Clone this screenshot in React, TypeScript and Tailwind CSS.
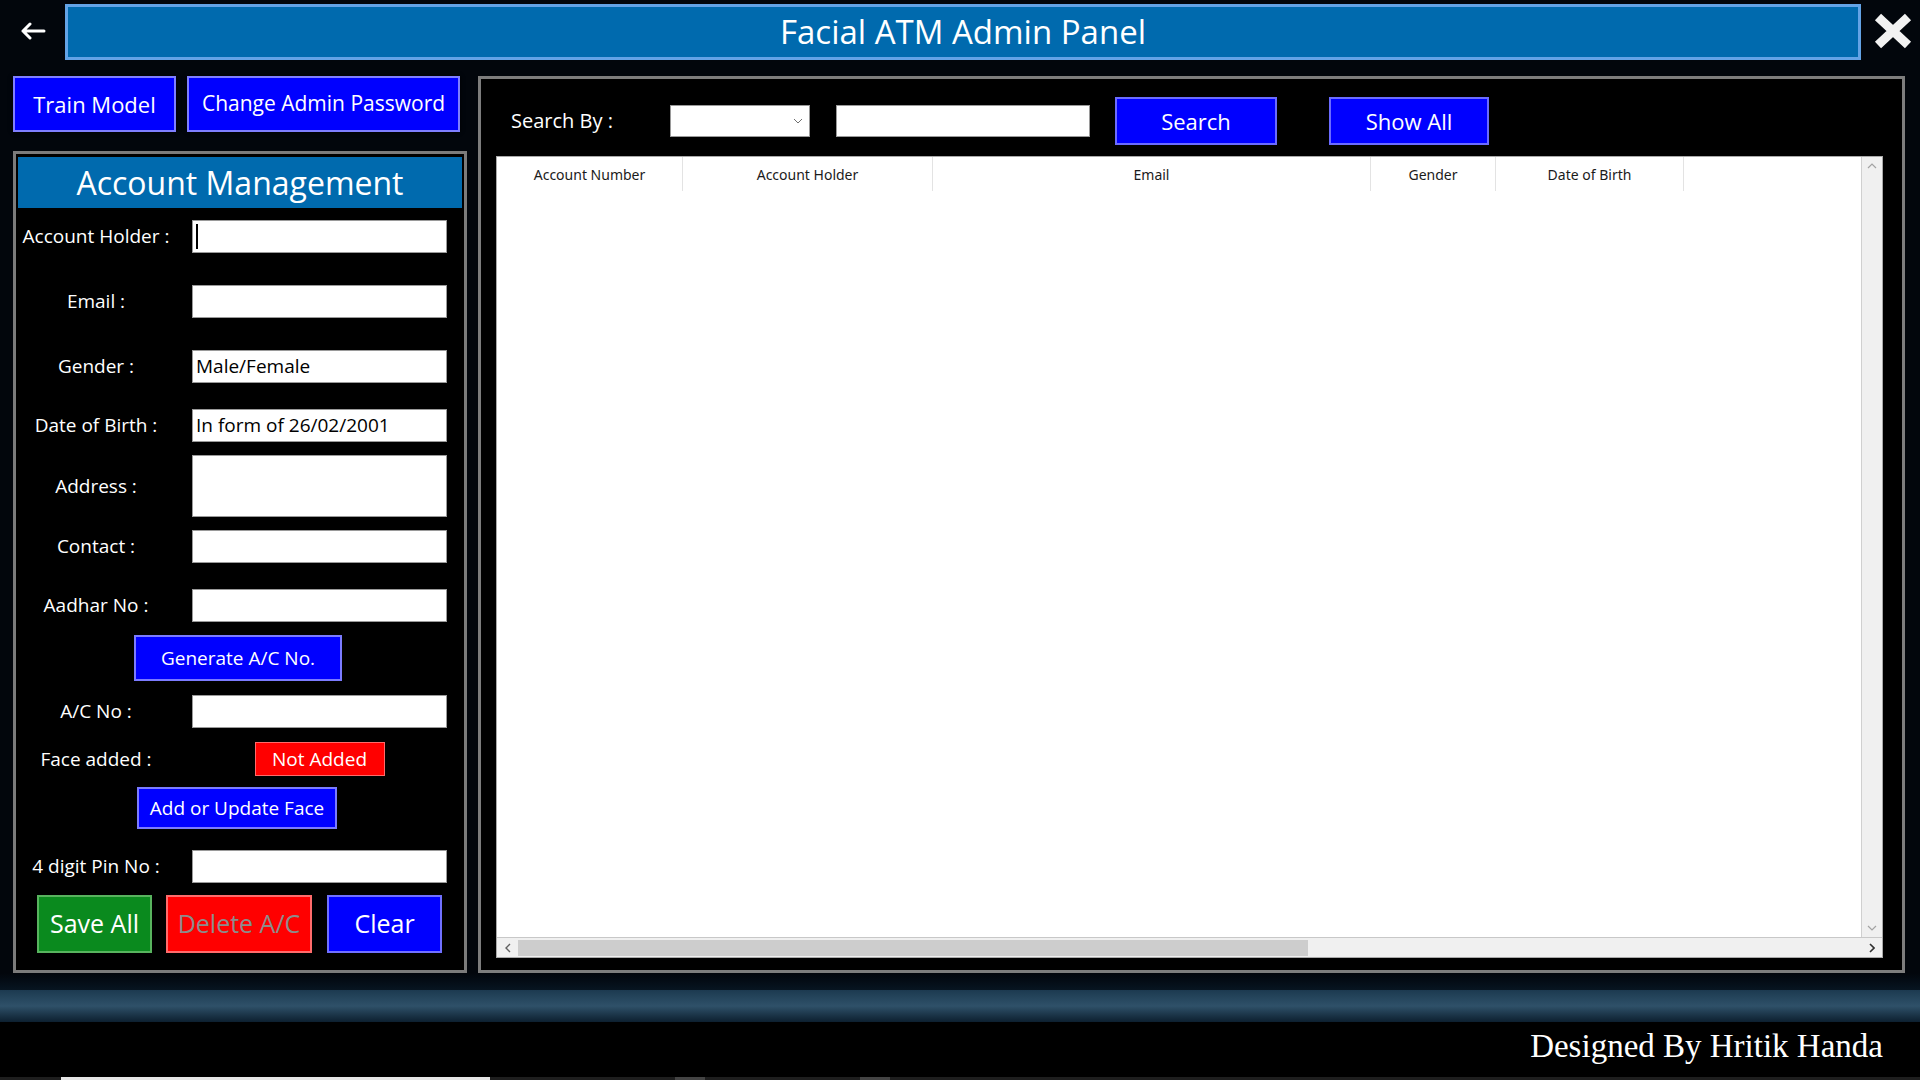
const ui = "font-['Comic_Sans_MS','Open_Sans',sans-serif]";

function Field({ label, value, tall, caret }: { label: string; value?: string; tall?: boolean; caret?: boolean }) {
  return (
    <div className="flex items-center">
      <div className="w-[160px] text-center text-[19px] text-white whitespace-nowrap">{label}</div>
      <div
        className={`ml-[16px] w-[255px] ${tall ? "h-[62px]" : "h-[33px]"} bg-white border border-[#9a9a9a] flex items-center px-[3px] text-[19px] text-black whitespace-nowrap`}
      >
        {caret && <span className="w-[2px] h-[25px] bg-black" />}
        {value}
      </div>
    </div>
  );
}

function Table() {
  const cols = [
    { name: "Account Number", w: "w-[186px]" },
    { name: "Account Holder", w: "w-[250px]" },
    { name: "Email", w: "w-[438px]" },
    { name: "Gender", w: "w-[125px]" },
    { name: "Date of Birth", w: "w-[188px]" },
  ];
  return (
    <div className="mt-[11px] ml-[15px] w-[1387px] h-[802px] bg-white border border-[#a9a9a9] flex flex-col">
      <div className="flex h-[780px]">
        <div className="flex-1 flex flex-col">
          <div className="flex h-[34px] font-['Noto_Sans',sans-serif] text-[14px] text-[#1b1b1b]">
            {cols.map((c) => (
              <div key={c.name} className={`${c.w} flex items-center justify-center border-r border-[#e3e3e3]`}>
                {c.name}
              </div>
            ))}
          </div>
          <div className="flex-1" />
        </div>
        <div className="w-[21px] bg-[#f0f0f0] border-l border-[#d0d0d0] flex flex-col justify-between items-center py-[6px]">
          <svg width="10" height="6" viewBox="0 0 10 6">
            <path d="M1 5 L5 1 L9 5" fill="none" stroke="#a3a3a3" strokeWidth="1.2" />
          </svg>
          <svg width="10" height="6" viewBox="0 0 10 6">
            <path d="M1 1 L5 5 L9 1" fill="none" stroke="#a3a3a3" strokeWidth="1.2" />
          </svg>
        </div>
      </div>
      <div className="h-[20px] bg-[#f0f0f0] border-t border-[#c8c8c8] flex items-center">
        <div className="w-[21px] flex justify-center">
          <svg width="6" height="10" viewBox="0 0 6 10">
            <path d="M5 1 L1 5 L5 9" fill="none" stroke="#606060" strokeWidth="1.4" />
          </svg>
        </div>
        <div className="w-[790px] h-[16px] bg-[#cdcdcd]" />
        <div className="flex-1" />
        <div className="w-[21px] flex justify-center">
          <svg width="6" height="10" viewBox="0 0 6 10">
            <path d="M1 1 L5 5 L1 9" fill="none" stroke="#303030" strokeWidth="1.6" />
          </svg>
        </div>
      </div>
    </div>
  );
}

export default function App() {
  return (
    <div className={`w-[1920px] h-[1080px] overflow-hidden flex flex-col bg-[#02060c] ${ui}`}>
      {/* Title row */}
      <div className="h-[76px] flex shrink-0">
        <div className="w-[65px] h-[62px] flex items-center justify-center">
          <svg width="26" height="18" viewBox="0 0 26 18">
            <path d="M24 9 H3 M10 2 L3 9 L10 16" fill="none" stroke="white" strokeWidth="3" strokeLinecap="round" strokeLinejoin="round" />
          </svg>
        </div>
        <div className="mt-[4px] h-[56px] w-[1796px] bg-[#006aae] border-[3px] border-[#63a3e6] flex items-center justify-center text-white text-[33px]">
          Facial ATM Admin Panel
        </div>
        <div className="flex-1 h-[62px] flex items-center justify-center pl-[4px]">
          <svg width="40" height="36" viewBox="0 0 40 36">
            <path d="M5 4 L35 32 M35 4 L5 32" stroke="#f2f2f2" strokeWidth="9" strokeLinecap="butt" />
          </svg>
        </div>
      </div>

      {/* Main */}
      <div className="h-[897px] flex shrink-0">
        <div className="ml-[13px] w-[454px] flex flex-col">
          <div className="h-[56px] flex gap-[11px]">
            <button className="w-[163px] h-full bg-[#0000ff] border-2 border-[#7f7fff] text-white text-[22px] shadow-[0_0_4px_#000]">
              Train Model
            </button>
            <button className="w-[273px] h-full bg-[#0000ff] border-2 border-[#7f7fff] text-white text-[21px] whitespace-nowrap shadow-[0_0_4px_#000]">
              Change Admin Password
            </button>
          </div>

          <div className="mt-[19px] h-[822px] bg-black border-[3px] border-[#7b7b7b] flex flex-col">
            <div className="mx-[2px] mt-[3px] h-[51px] bg-[#006aae] flex items-center justify-center text-white text-[32px]">
              Account Management
            </div>
            <div className="mt-[12px]">
              <Field label="Account Holder :" caret />
            </div>
            <div className="mt-[32px]">
              <Field label="Email :" />
            </div>
            <div className="mt-[32px]">
              <Field label="Gender :" value="Male/Female" />
            </div>
            <div className="mt-[26px]">
              <Field label="Date of Birth :" value="In form of 26/02/2001" />
            </div>
            <div className="mt-[13px]">
              <Field label="Address :" tall />
            </div>
            <div className="mt-[13px]">
              <Field label="Contact :" />
            </div>
            <div className="mt-[26px]">
              <Field label="Aadhar No :" />
            </div>
            <div className="mt-[13px] flex justify-center pr-[4px]">
              <button className="w-[208px] h-[46px] bg-[#0000ff] border-2 border-[#7b7bff] text-white text-[19px]">
                Generate A/C No.
              </button>
            </div>
            <div className="mt-[14px]">
              <Field label="A/C No :" />
            </div>
            <div className="mt-[14px] flex items-center">
              <div className="w-[160px] text-center text-[19px] text-white">Face added :</div>
              <div className="ml-[16px] w-[255px] flex justify-center">
                <div className="w-[130px] h-[34px] bg-[#ff0000] border border-[#ff6a6a] flex items-center justify-center text-white text-[19px]">
                  Not Added
                </div>
              </div>
            </div>
            <div className="mt-[11px] flex justify-center pr-[6px]">
              <button className="w-[200px] h-[42px] bg-[#0000ff] border-2 border-[#7b7bff] text-white text-[19px] whitespace-nowrap">
                Add or Update Face
              </button>
            </div>
            <div className="mt-[21px]">
              <Field label="4 digit Pin No :" />
            </div>
            <div className="mt-[12px] pl-[21px] flex">
              <button className="w-[115px] h-[58px] bg-[#0a8a1e] border-2 border-[#58b35e] text-white text-[25px]">
                Save All
              </button>
              <button className="ml-[14px] w-[146px] h-[58px] bg-[#ff0000] border-2 border-[#ff6b6b] text-[#8c8c8c] text-[25px] whitespace-nowrap">
                Delete A/C
              </button>
              <button className="ml-[15px] w-[115px] h-[58px] bg-[#0000ff] border-2 border-[#7070ff] text-white text-[25px]">
                Clear
              </button>
            </div>
          </div>
        </div>

        <div className="ml-[11px] w-[1427px] h-full bg-black border-[3px] border-[#7d7d7d] flex flex-col">
          <div className="mt-[18px] h-[48px] flex items-center">
            <div className="ml-[30px] w-[159px] text-white text-[20px]">Search By :</div>
            <div className="w-[140px] h-[32px] bg-white border border-[#9a9a9a] flex items-center justify-end pr-[6px]">
              <svg width="10" height="6" viewBox="0 0 10 6">
                <path d="M1 1 L5 5 L9 1" fill="none" stroke="#707070" strokeWidth="1" />
              </svg>
            </div>
            <div className="ml-[26px] w-[254px] h-[32px] bg-white border border-[#9a9a9a]" />
            <button className="ml-[25px] w-[162px] h-[48px] bg-[#0000ff] border-2 border-[#6b6bff] text-white text-[22px]">
              Search
            </button>
            <button className="ml-[52px] w-[160px] h-[48px] bg-[#0000ff] border-2 border-[#6b6bff] text-white text-[22px]">
              Show All
            </button>
          </div>
          <Table />
        </div>
      </div>

      <div className="h-[17px] shrink-0 bg-gradient-to-b from-[#02060c] to-[#071521]" />
      <div className="h-[32px] shrink-0 bg-gradient-to-b from-[#1c3a50] via-[#2f5169] to-[#0d2030]" />
      <div className="h-[55px] shrink-0 bg-black flex items-start justify-end pr-[37px] pt-[8px]">
        <span className="font-['Liberation_Serif',serif] text-[33px] text-white leading-none">Designed By Hritik Handa</span>
      </div>
      <div className="h-[3px] shrink-0 bg-[#1e1e1e] flex">
        <div className="ml-[61px] w-[429px] bg-[#e6e6e6]" />
        <div className="ml-[185px] w-[30px] bg-[#444]" />
        <div className="ml-[155px] w-[30px] bg-[#444]" />
      </div>
    </div>
  );
}
